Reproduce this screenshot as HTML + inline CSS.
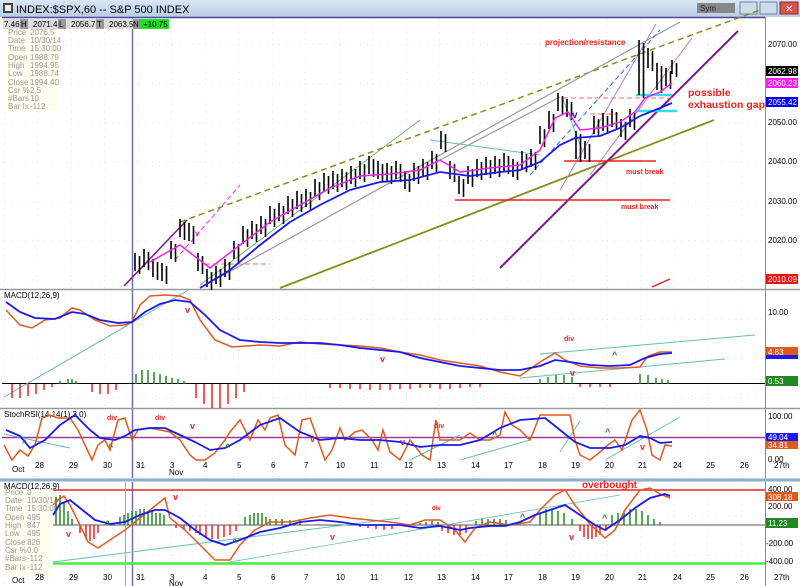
<!DOCTYPE html>
<html><head><meta charset="utf-8"><style>
body{margin:0;width:800px;height:586px;overflow:hidden;background:#fff;font-family:"Liberation Sans",sans-serif}
svg{display:block}
text{font-family:"Liberation Sans",sans-serif}
</style></head><body>
<svg width="800" height="586" viewBox="0 0 800 586" xmlns="http://www.w3.org/2000/svg">
<defs>
<linearGradient id="tb" x1="0" y1="0" x2="0" y2="1"><stop offset="0" stop-color="#d9e6f4"/><stop offset="1" stop-color="#b9cde5"/></linearGradient>
<pattern id="g" width="33.5" height="39.3" patternUnits="userSpaceOnUse" x="4" y="4.7"><path d="M0 0V39.3M0 0H33.5" stroke="#c8c8c8" stroke-width="1" stroke-dasharray="1 6" fill="none"/></pattern>
</defs>
<rect width="800" height="586" fill="#fff"/>
<rect x="0" y="0" width="800" height="17" fill="url(#tb)"/>
<rect x="3" y="3" width="10" height="10" fill="#444"/><rect x="5" y="5" width="6" height="6" fill="#eee"/>
<text x="16" y="13" font-size="11" fill="#000">INDEX:$SPX,60 -- S&amp;P 500 INDEX</text>
<rect x="697" y="3" width="38" height="10" fill="#888"/><text x="700" y="11" font-size="8" fill="#222">Sym</text>
<rect x="740" y="2" width="17" height="12" fill="#cfdcec" stroke="#6d86a8"/><rect x="760" y="2" width="17" height="12" fill="#cfdcec" stroke="#6d86a8"/><rect x="780" y="2" width="18" height="12" fill="#d9534f" stroke="#8a2b2b"/>
<text x="785" y="12" font-size="10" fill="#fff">✕</text>
<rect x="2" y="18" width="763" height="568" fill="url(#g)"/>
<line x1="2" y1="17.5" x2="765" y2="17.5" stroke="#4848a0" stroke-width="1.5"/>
<line x1="765.5" y1="17" x2="765.5" y2="586" stroke="#888"/>
<line x1="132.5" y1="18" x2="132.5" y2="586" stroke="#7070b8" stroke-width="1.5"/>
<line x1="0" y1="289.5" x2="800" y2="289.5" stroke="#999" stroke-width="1.5"/>
<line x1="0" y1="408.5" x2="800" y2="408.5" stroke="#999" stroke-width="1.5"/>
<rect x="0" y="478" width="800" height="4" fill="#c3d3e6"/><line x1="0" y1="480" x2="800" y2="480" stroke="#5a8fa8"/>
<rect x="3" y="19" width="164" height="10" fill="#ddd"/>
<text x="4" y="27" font-size="8">7.46</text><rect x="20" y="19" width="8" height="10" fill="#999"/><text x="21" y="27" font-size="8">H</text>
<text x="33" y="27" font-size="8">2071.46</text><rect x="58" y="19" width="8" height="10" fill="#999"/><text x="59" y="27" font-size="8">L</text>
<text x="71" y="27" font-size="8">2056.75</text><rect x="96" y="19" width="8" height="10" fill="#999"/><text x="97" y="27" font-size="8">T</text>
<text x="109" y="27" font-size="8">2063.50</text><rect x="133" y="19" width="6" height="10" fill="#999"/><text x="133" y="27" font-size="8">N</text>
<rect x="139" y="19" width="30" height="10" fill="#22dd22"/><text x="143" y="27" font-size="8" fill="#000">+10.75</text>
<rect x="3" y="29" width="54" height="82" fill="#fdfdf0"/>
<g font-size="8" fill="#999">
<text x="8" y="35">Price</text><text x="30" y="35">2076.5</text>
<text x="8" y="43">Date</text><text x="30" y="43">10/30/14</text>
<text x="8" y="51">Time</text><text x="30" y="51">15:30:00</text>
<text x="8" y="60">Open</text><text x="30" y="60">1988.79</text>
<text x="8" y="68">High</text><text x="30" y="68">1994.95</text>
<text x="8" y="76">Low</text><text x="30" y="76">1988.74</text>
<text x="8" y="85">Close</text><text x="30" y="85">1994.40</text>
<text x="8" y="93">Csr %</text><text x="30" y="93">2.5</text>
<text x="8" y="101">#Bars</text><text x="30" y="101">10</text>
<text x="8" y="109">Bar Ix</text><text x="30" y="109">-112</text>
</g>
<g font-size="8" fill="#000">
<text x="768" y="47">2070.00</text><text x="768" y="125">2050.00</text><text x="768" y="164">2040.00</text><text x="768" y="204">2030.00</text><text x="768" y="243">2020.00</text>
</g>
<rect x="766" y="66" width="32" height="10" fill="#000"/><text x="768" y="74" font-size="8" fill="#fff">2062.98</text>
<rect x="766" y="78" width="32" height="10" fill="#ee22ee"/><text x="768" y="86" font-size="8" fill="#fff">2060.23</text>
<rect x="766" y="97" width="32" height="10" fill="#0000ee"/><text x="768" y="105" font-size="8" fill="#fff">2055.42</text>
<rect x="766" y="274" width="32" height="10" fill="#ee1111"/><text x="768" y="282" font-size="8" fill="#fff">2010.09</text>
<line x1="180" y1="222" x2="760" y2="10" stroke="#8b8b1a" stroke-width="1.5" stroke-dasharray="6 4"/>
<line x1="280" y1="288" x2="714" y2="120" stroke="#8b8b1a" stroke-width="1.8"/>
<line x1="500" y1="268" x2="738" y2="31" stroke="#7a1a8a" stroke-width="2"/>
<line x1="124" y1="286" x2="187" y2="220" stroke="#7a1a8a" stroke-width="1.5"/>
<line x1="200" y1="288" x2="680" y2="22" stroke="#999" stroke-width="1.2"/>
<line x1="440" y1="160" x2="560" y2="97" stroke="#999" stroke-width="1.2"/>
<line x1="560" y1="190" x2="656" y2="24" stroke="#b080c0" stroke-width="1"/>
<line x1="590" y1="175" x2="692" y2="38" stroke="#b080c0" stroke-width="1"/>
<line x1="530" y1="175" x2="660" y2="30" stroke="#3366ff" stroke-width="1" stroke-dasharray="5 3"/>
<line x1="175" y1="260" x2="240" y2="185" stroke="#ff22ff" stroke-width="1" stroke-dasharray="5 3"/>
<line x1="200" y1="285" x2="420" y2="120" stroke="#55aa55" stroke-width="0.8"/>
<line x1="430" y1="140" x2="540" y2="155" stroke="#66bbbb" stroke-width="1"/>
<line x1="563" y1="99" x2="582" y2="150" stroke="#66bbbb" stroke-width="1"/>
<line x1="563" y1="98" x2="672" y2="98" stroke="#ff6666" stroke-dasharray="5 3"/>
<line x1="590" y1="114" x2="618" y2="114" stroke="#ff6666" stroke-dasharray="5 3"/>
<line x1="205" y1="264" x2="270" y2="264" stroke="#ff6666" stroke-dasharray="5 3"/>
<line x1="455" y1="200" x2="670" y2="200" stroke="#ee2222" stroke-width="1.5"/>
<line x1="564" y1="161" x2="656" y2="161" stroke="#ee2222" stroke-width="1.5"/>
<line x1="636" y1="95" x2="672" y2="95" stroke="#33ddee" stroke-width="2.5"/>
<line x1="636" y1="111" x2="677" y2="111" stroke="#33ddee" stroke-width="2.5"/>
<line x1="652" y1="287" x2="670" y2="279" stroke="#ee2222" stroke-width="1.5"/>
<g id="bars">
<path stroke="#000" stroke-width="1.6" fill="none" d="M135 253v18M144 249v18M153 259v18M162 263v18M171 241v18M180 219v18M189 223v18M198 253v18M207 269v18M216 266v18M225 259v18M234 241v18M243 226v18M252 221v18M261 216v18M270 206v18M279 203v18M288 196v18M297 191v18M306 189v18M315 179v18M324 173v18M333 171v18M342 169v18M351 166v18M360 161v18M369 156v18M378 161v18M387 163v18M396 161v18M405 171v18M414 163v18M423 159v18M432 151v18M441 131v18M450 161v18M459 176v18M468 166v18M477 159v18M486 157v18M495 156v18M504 153v18M513 159v18M522 151v18M531 149v18M540 126v18M549 111v18M558 93v18M567 99v18M576 131v28M585 141v18M594 116v18M603 113v18M612 109v18M621 119v18M630 109v18M639 40v55M648 48v20M657 63v27M666 68v18M672 60v14"/>
</g>
<use href="#bars" transform="translate(4.5,3)"/>
<polyline fill="none" stroke="#ee22ee" stroke-width="1.5" points="150,262 180,245 210,268 240,245 270,222 300,205 330,188 360,176 390,174 420,170 440,160 460,172 490,168 520,165 540,150 555,118 568,112 580,130 600,128 620,122 635,112 645,98 660,92 672,83"/>
<polyline fill="none" stroke="#1a1aee" stroke-width="1.8" points="200,288 230,270 260,245 290,222 320,205 350,190 380,182 410,180 440,172 470,176 500,172 520,170 540,162 560,145 575,138 600,136 620,128 640,116 660,108 672,103"/>
<text x="545" y="45" font-size="8" fill="#ee2222" font-weight="bold">projection/resistance</text>
<text x="688" y="96" font-size="10.5" fill="#ee2222" font-weight="bold">possible</text>
<text x="688" y="108" font-size="10.5" fill="#ee2222" font-weight="bold">exhaustion gap</text>
<text x="626" y="174" font-size="7" fill="#ee2222" font-weight="bold">must break</text>
<text x="621" y="209" font-size="7" fill="#ee2222" font-weight="bold">must break</text>
<text x="195" y="236" font-size="8" fill="#ee22ee" font-weight="bold">v</text>
<text x="572" y="118" font-size="10" fill="#2222cc" font-weight="bold">v</text>

<text x="4" y="298" font-size="8">MACD(12,26,9)</text>
<g font-size="8"><text x="768" y="315">10.00</text></g>
<rect x="766" y="347" width="32" height="9" fill="#e05a20"/><text x="768" y="355" font-size="8" fill="#fff">4.63</text>
<rect x="766" y="355" width="32" height="4" fill="#1a1aee"/>
<rect x="766" y="376" width="32" height="10" fill="#228822"/><text x="768" y="384" font-size="8" fill="#fff">0.53</text>
<line x1="2" y1="383.5" x2="765" y2="383.5" stroke="#000"/>
<line x1="4" y1="397" x2="190" y2="289" stroke="#66bbbb"/>
<line x1="540" y1="354" x2="755" y2="335" stroke="#66bbbb"/>
<line x1="520" y1="378" x2="725" y2="359" stroke="#66bbbb"/>
<path stroke="#ee2222" stroke-width="1.5" d="M12 384v14M20 384v14M28 384v12M36 384v10M44 384v6M52 384v3M92 384v8M100 384v10M108 384v10M116 384v6M196 384v14M204 384v20M212 384v24M220 384v24M228 384v20M236 384v14M244 384v8M330 384v4M340 384v4M350 384v5M360 384v5M370 384v6M380 384v6M390 384v6M400 384v5M410 384v5M420 384v4M430 384v4M440 384v5M450 384v5M460 384v4M470 384v3M480 384v3M580 384v3M590 384v3M600 384v3M610 384v3"/>
<path stroke="#228822" stroke-width="1.5" d="M60 384v-3M68 384v-5M72 384v-5M76 384v-3M136 384v-10M142 384v-14M148 384v-14M154 384v-12M160 384v-10M166 384v-8M172 384v-6M178 384v-5M184 384v-3M540 384v-5M548 384v-7M556 384v-9M564 384v-9M572 384v-7M640 384v-10M648 384v-9M656 384v-6M662 384v-5M668 384v-4"/>
<polyline fill="none" stroke="#e05a20" stroke-width="1.5" points="6,310 20,325 32,328 45,320 60,318 72,308 80,310 95,320 110,326 125,325 132,322 140,305 150,296 165,295 180,296 190,300 200,320 215,340 232,347 260,345 280,346 300,342 320,344 340,345 360,346 380,348 400,352 420,355 440,360 460,363 480,366 500,372 520,376 540,362 555,353 565,360 580,366 600,368 620,368 640,367 648,356 660,352 672,352"/>
<polyline fill="none" stroke="#1a1aee" stroke-width="1.8" points="6,302 20,312 35,318 55,319 72,312 85,314 100,320 118,323 132,322 145,312 160,304 175,300 190,302 205,315 220,330 240,340 260,342 280,343 300,343 320,343 340,345 360,348 380,350 400,352 420,358 440,362 460,366 480,368 500,370 520,370 540,366 555,360 570,362 590,365 610,366 630,365 645,358 660,354 672,353"/>
<g font-size="9" font-weight="bold"><text x="185" y="313" fill="#ee2222">v</text><text x="380" y="362" fill="#ee2222">v</text><text x="570" y="376" fill="#ee2222">v</text><text x="612" y="358" fill="#228822">^</text><text x="564" y="341" font-size="7" fill="#ee2222">div</text></g>

<text x="4" y="417" font-size="8">StochRSI(14,14(1),3,0)</text>
<g font-size="8"><text x="768" y="419">100.00</text><text x="768" y="462">0.00</text></g>
<rect x="766" y="433" width="32" height="8" fill="#1a1aee"/><text x="768" y="440" font-size="8" fill="#fff">49.04</text>
<rect x="766" y="441" width="32" height="8" fill="#e05a20"/><text x="768" y="448" font-size="8" fill="#fff">34.81</text>
<line x1="2" y1="437.5" x2="765" y2="437.5" stroke="#9a3a9a" stroke-width="1.5"/>
<line x1="4" y1="434" x2="70" y2="448" stroke="#66bbbb"/>
<line x1="605" y1="460" x2="680" y2="417" stroke="#66bbbb"/>
<line x1="410" y1="460" x2="460" y2="435" stroke="#66bbbb"/>
<line x1="460" y1="460" x2="530" y2="440" stroke="#66bbbb"/>
<line x1="560" y1="452" x2="580" y2="421" stroke="#66bbbb"/>
<polyline fill="none" stroke="#e05a20" stroke-width="1.5" points="4,445 12,460 20,450 28,456 35,445 42,418 50,415 58,418 70,418 78,430 85,445 92,460 98,445 105,440 110,450 118,420 125,418 132,440 138,430 150,428 160,430 170,432 180,440 190,455 196,460 205,460 215,453 225,440 230,432 240,420 250,440 258,420 265,430 270,418 278,415 285,445 295,455 302,420 310,418 318,440 325,460 332,450 340,428 345,440 355,432 362,430 372,440 378,450 383,430 390,452 400,460 410,440 422,455 430,460 436,420 440,440 450,440 460,440 470,433 480,440 490,440 500,435 505,412 512,425 520,430 530,440 540,415 560,415 570,415 575,440 580,455 590,460 600,452 608,445 615,440 622,450 632,420 640,410 647,430 652,455 660,460 665,445 672,446"/>
<polyline fill="none" stroke="#1a1aee" stroke-width="1.8" points="6,430 20,436 30,448 45,440 60,425 75,415 90,430 100,438 115,440 125,436 135,430 150,428 165,428 180,435 195,442 210,450 225,448 240,440 260,425 280,418 300,432 320,440 340,438 360,440 380,440 400,442 420,447 440,445 460,445 480,440 500,428 520,420 545,418 560,430 575,442 590,448 610,448 625,445 640,436 650,438 660,443 672,442"/>
<g font-size="9" font-weight="bold">
<text x="22" y="446" fill="#228822">^</text><text x="108" y="450" fill="#228822">^</text><text x="225" y="450" fill="#228822">^</text><text x="492" y="438" fill="#228822">^</text><text x="605" y="435" fill="#228822">^</text>
<text x="190" y="429" fill="#ee2222">v</text><text x="310" y="442" fill="#ee2222">v</text><text x="400" y="445" fill="#ee2222">v</text><text x="640" y="450" fill="#ee2222">v</text>
<g font-size="7"><text x="107" y="420" fill="#ee2222">div</text><text x="155" y="420" fill="#ee2222">div</text><text x="434" y="428" fill="#ee2222">div</text></g></g>
<g font-size="8" fill="#000"><text x="12" y="472">Oct</text><text x="35" y="468">28</text><text x="69" y="468">29</text><text x="103" y="468">30</text><text x="136" y="468">31</text><text x="170" y="468">3</text><text x="169" y="475">Nov</text><text x="203" y="468">4</text><text x="237" y="468">5</text><text x="271" y="468">6</text><text x="304" y="468">7</text><text x="336" y="468">10</text><text x="370" y="468">11</text><text x="404" y="468">12</text><text x="437" y="468">13</text><text x="471" y="468">14</text><text x="504" y="468">17</text><text x="538" y="468">18</text><text x="571" y="468">19</text><text x="605" y="468">20</text><text x="638" y="468">21</text><text x="673" y="468">24</text><text x="706" y="468">25</text><text x="740" y="468">26</text><text x="774" y="468">27th</text></g>

<text x="4" y="489" font-size="8">MACD(12,26,9)</text>
<rect x="3" y="490" width="50" height="88" fill="#fdfdf0"/>
<g font-size="8" fill="#999">
<text x="5" y="495">Price</text><text x="27" y="495">0</text>
<text x="5" y="503">Date</text><text x="27" y="503">10/30/14</text>
<text x="5" y="511">Time</text><text x="27" y="511">15:30:00</text>
<text x="5" y="520">Open</text><text x="27" y="520">495</text>
<text x="5" y="528">High</text><text x="27" y="528">847</text>
<text x="5" y="536">Low</text><text x="27" y="536">495</text>
<text x="5" y="545">Close</text><text x="27" y="545">826</text>
<text x="5" y="553">Csr %</text><text x="27" y="553">0.0</text>
<text x="5" y="561">#Bars</text><text x="27" y="561">-112</text>
<text x="5" y="570">Bar Ix</text><text x="27" y="570">-112</text>
</g>
<g font-size="8"><text x="768" y="492">400.00</text><text x="768" y="509">200.00</text><text x="766" y="546">-200.00</text><text x="766" y="564">-400.00</text></g>
<rect x="766" y="492" width="32" height="9" fill="#e05a20"/><text x="768" y="500" font-size="8" fill="#fff">308.18</text>
<rect x="766" y="518" width="32" height="10" fill="#228822"/><text x="768" y="526" font-size="8" fill="#fff">11.23</text>
<line x1="53" y1="490" x2="765" y2="490" stroke="#ee2222" stroke-width="1.5"/>
<line x1="53" y1="525" x2="765" y2="525" stroke="#555"/>
<line x1="53" y1="563.5" x2="765" y2="563.5" stroke="#44ee44" stroke-width="2.5"/>
<line x1="125.5" y1="482" x2="125.5" y2="586" stroke="#ee8888"/>
<line x1="53" y1="562" x2="400" y2="518" stroke="#66bbbb"/>
<line x1="230" y1="562" x2="620" y2="495" stroke="#66bbbb" stroke-width="0.8"/>
<path stroke="#228822" stroke-width="1.5" d="M56 525v-28M60 525v-30M64 525v-22M68 525v-14M72 525v-6M120 525v-8M124 525v-10M128 525v-12M132 525v-14M136 525v-14M140 525v-16M144 525v-16M148 525v-14M152 525v-14M156 525v-12M160 525v-12M164 525v-10M245 525v-8M250 525v-10M254 525v-12M258 525v-12M262 525v-12M266 525v-8M270 525v-6M276 525v-6M282 525v-6M290 525v-5M300 525v-5M420 525v-2M426 525v-3M432 525v-4M438 525v-3M476 525v-4M482 525v-6M488 525v-6M494 525v-6M500 525v-6M506 525v-5M540 525v-12M546 525v-16M552 525v-16M558 525v-14M564 525v-12M572 525v-6M612 525v-10M618 525v-12M624 525v-14M630 525v-16M636 525v-16M642 525v-14M648 525v-10M654 525v-6M660 525v-3"/>
<path stroke="#ee2222" stroke-width="1.5" d="M80 525v8M86 525v14M90 525v16M94 525v14M98 525v8M176 525v3M184 525v5M190 525v6M196 525v8M200 525v10M206 525v12M212 525v14M218 525v14M224 525v12M230 525v10M236 525v6M360 525v2M368 525v3M376 525v4M384 525v5M392 525v4M442 525v6M448 525v8M454 525v10M460 525v10M466 525v8M580 525v6M584 525v12M588 525v14M592 525v14M596 525v12M600 525v10M606 525v6"/>
<polyline fill="none" stroke="#e05a20" stroke-width="1.5" points="53,505 58,500 64,496 70,505 80,525 88,542 98,548 110,540 125,530 140,518 155,506 165,498 170,518 185,530 200,545 215,560 230,560 240,545 255,530 270,522 290,522 310,518 330,515 350,518 370,520 390,522 410,525 425,520 440,520 455,530 465,542 475,528 490,522 510,525 530,522 540,510 555,495 565,490 575,505 590,524 605,538 615,530 625,510 640,490 650,488 660,494 670,498"/>
<polyline fill="none" stroke="#1a1aee" stroke-width="1.8" points="53,515 60,504 70,500 80,508 95,520 110,524 125,522 140,515 155,510 165,510 180,518 195,530 210,540 225,545 240,540 260,532 280,528 300,522 320,520 340,522 360,525 380,525 400,525 420,528 440,526 460,530 470,528 490,526 505,526 520,522 535,515 550,510 565,505 580,515 595,525 605,530 620,520 635,508 650,498 665,494 670,496"/>
<g font-size="9" font-weight="bold">
<text x="66" y="537" fill="#ee2222">v</text><text x="173" y="500" fill="#ee2222">v</text><text x="330" y="540" fill="#ee2222">v</text><text x="569" y="540" fill="#ee2222">v</text>
<text x="105" y="527" fill="#228822">^</text><text x="232" y="545" fill="#228822">^</text><text x="520" y="520" fill="#228822">^</text><text x="602" y="521" fill="#228822">^</text>
<text x="432" y="510" font-size="6" fill="#ee2222">div</text>
<text x="582" y="488" font-size="10" fill="#ee2222">overbought</text></g>
<g font-size="8" fill="#000"><text x="12" y="583">Oct</text><text x="35" y="580">28</text><text x="69" y="580">29</text><text x="103" y="580">30</text><text x="136" y="580">31</text><text x="170" y="580">3</text><text x="169" y="586">Nov</text><text x="203" y="580">4</text><text x="237" y="580">5</text><text x="271" y="580">6</text><text x="304" y="580">7</text><text x="336" y="580">10</text><text x="370" y="580">11</text><text x="404" y="580">12</text><text x="437" y="580">13</text><text x="471" y="580">14</text><text x="504" y="580">17</text><text x="538" y="580">18</text><text x="571" y="580">19</text><text x="605" y="580">20</text><text x="638" y="580">21</text><text x="673" y="580">24</text><text x="706" y="580">25</text><text x="740" y="580">26</text><text x="774" y="580">27th</text></g>
</svg>
</body></html>
